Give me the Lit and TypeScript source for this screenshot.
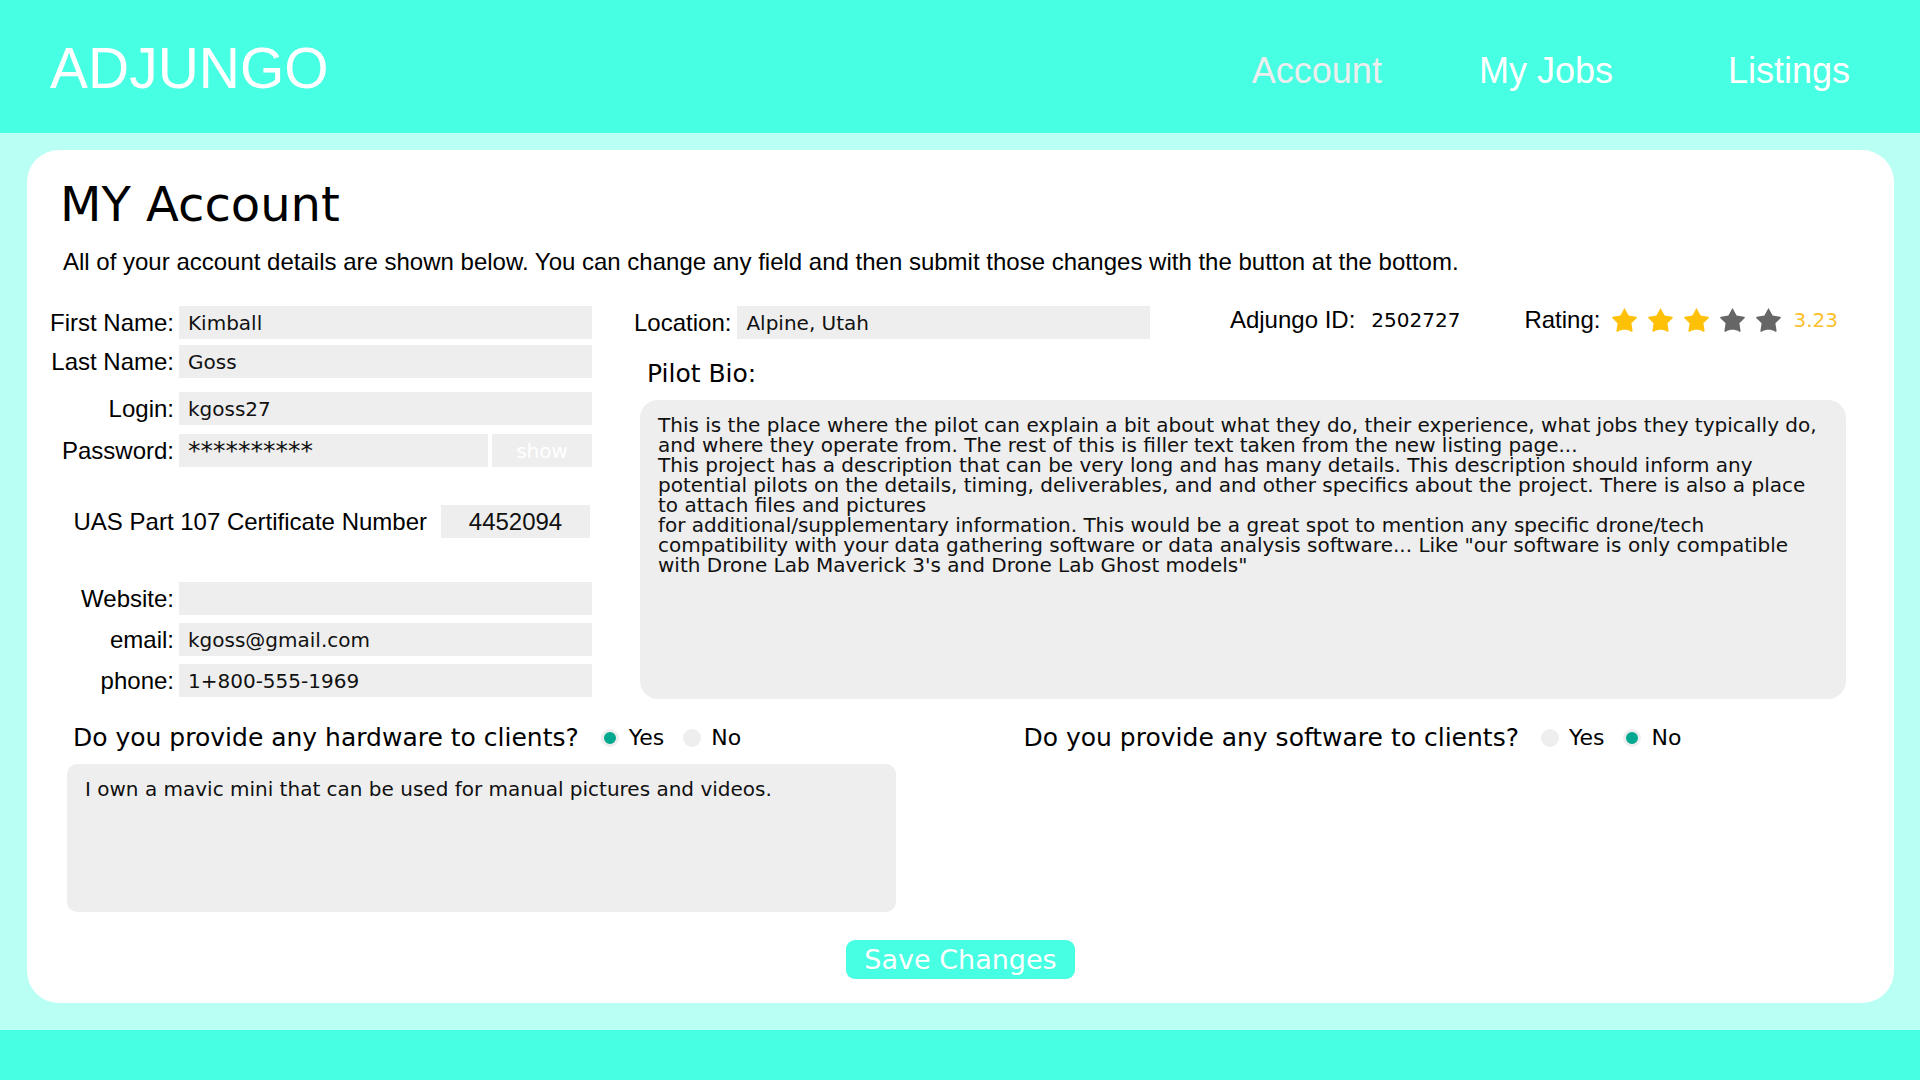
import { LitElement, html, css } from "lit";
import { customElement, property, state } from "lit/decorators.js";

const BIO = [
  "This is the place where the pilot can explain a bit about what they do, their experience, what jobs they typically do,",
  "and where they operate from. The rest of this is filler text taken from the new listing page...",
  "This project has a description that can be very long and has many details. This description should inform any",
  "potential pilots on the details, timing, deliverables, and and other specifics about the project. There is also a place",
  "to attach files and pictures",
  "for additional/supplementary information. This would be a great spot to mention any specific drone/tech",
  "compatibility with your data gathering software or data analysis software... Like \"our software is only compatible",
  "with Drone Lab Maverick 3's and Drone Lab Ghost models\"",
].join("\n");

@customElement("star-rating")
export class StarRating extends LitElement {
  @property({ type: Number }) value = 0;

  static styles = css`
    :host {
      display: flex;
      gap: 11px;
    }
    .star {
      display: block;
      width: 25px;
      height: 24px;
      fill: #666666;
    }
    .star.on {
      fill: #ffc107;
    }
  `;

  render() {
    return [1, 2, 3, 4, 5].map(
      (n) => html`
        <svg class="star ${n <= this.value ? "on" : ""}" viewBox="0 0 25 24" aria-hidden="true">
          <path
            d="M12.5 0.1 L16.6 7.6 L24 8.8 C25 9 25.1 9.7 24.5 10.3 L19.4 15.3 L20.6 22.9 C20.7 23.8 20.1 24.1 19.4 23.8 C15 21.2 10 21.2 5.6 23.8 C4.9 24.1 4.3 23.8 4.4 22.9 L5.6 15.3 L0.5 10.3 C-0.1 9.7 0 9 1 8.8 L8.4 7.6 Z"
          />
        </svg>
      `
    );
  }
}

@customElement("app-root")
export class AppRoot extends LitElement {
  @state() private hardware = "yes";
  @state() private software = "no";

  static styles = css`
    :host {
      display: flex;
      flex-direction: column;
      min-height: 100vh;
      background: #b9fff4;
      color: #000;
      font-family: "Liberation Sans", Arial, sans-serif;
      font-size: 24px;
      line-height: 28px;
    }
    * {
      box-sizing: border-box;
    }
    .top {
      display: flex;
      align-items: center;
      justify-content: space-between;
      padding: 35px 70px 32px 50px;
      background: #47ffe3;
    }
    .brand {
      color: #fff;
      font-size: 57px;
      line-height: 66px;
      text-decoration: none;
    }
    .nav {
      display: flex;
      gap: 97px;
      padding-top: 5px;
      font-size: 36px;
      line-height: 40px;
    }
    .nav a {
      color: #fff;
      text-decoration: none;
    }
    .nav a.current {
      color: #eeeeee;
    }
    .nav a:last-child {
      margin-left: 18px;
    }
    .main {
      flex: 1;
      padding: 17px 26px 27px 27px;
    }
    .card {
      padding: 26px 22px 24px;
      border-radius: 32px;
      background: #fff;
    }
    h1 {
      margin: 0 0 16px;
      padding-left: 11px;
      font-family: Verdana, "DejaVu Sans", sans-serif;
      font-size: 48px;
      font-weight: 400;
      line-height: 56px;
    }
    .intro {
      margin: 0 0 30px;
      padding-left: 14px;
    }
    .details {
      display: grid;
      grid-template-columns: 543px 1fr;
      column-gap: 42px;
      padding-right: 26px;
    }
    .group {
      display: grid;
      grid-template-columns: 125px 1fr;
      gap: 6px 5px;
      margin-bottom: 14px;
    }
    .group.spaced {
      row-gap: 9px;
      margin-bottom: 38px;
    }
    .group:last-child {
      row-gap: 8px;
      margin-bottom: 0;
    }
    .group label {
      text-align: right;
      white-space: nowrap;
      line-height: 33px;
    }
    input.text,
    textarea,
    .show {
      display: block;
      min-width: 0;
      margin: 0;
      border: 0;
      border-radius: 0;
      background: #eeeeee;
      color: #111;
      font-family: Verdana, "DejaVu Sans", sans-serif;
      font-size: 20px;
    }
    input.text {
      width: 100%;
      height: 33px;
      padding: 0 9px;
    }
    .secret {
      display: grid;
      grid-template-columns: 1fr 100px;
      gap: 4px;
    }
    .secret input.text {
      font-size: 25px;
    }
    .show {
      padding: 0;
      color: #fff;
    }
    .cert {
      display: flex;
      align-items: center;
      justify-content: flex-end;
      gap: 14px;
      margin-bottom: 44px;
      padding-right: 2px;
      line-height: 33px;
    }
    .cert input.text {
      width: 149px;
      padding: 0;
      font-family: inherit;
      font-size: 24px;
      text-align: center;
    }
    .summary {
      display: flex;
      align-items: flex-start;
      justify-content: space-between;
      margin-bottom: 20px;
      padding-right: 8px;
    }
    .place {
      display: flex;
      gap: 6px;
      line-height: 33px;
    }
    .place input.text {
      width: 413px;
    }
    .meta {
      display: flex;
      gap: 64px;
    }
    .pair {
      display: flex;
      align-items: center;
      gap: 12px;
    }
    .pair.id {
      gap: 16px;
    }
    .value {
      font-family: Verdana, "DejaVu Sans", sans-serif;
      font-size: 20px;
    }
    .value.score {
      color: #fcbf2c;
    }
    .question {
      font-family: Verdana, "DejaVu Sans", sans-serif;
      font-size: 25px;
      line-height: 30px;
    }
    .bio-label {
      display: block;
      margin-bottom: 11px;
      padding-left: 13px;
    }
    textarea {
      width: 100%;
      padding: 15px 18px;
      border-radius: 10px;
      line-height: 20px;
      resize: none;
    }
    .bio {
      padding-left: 6px;
    }
    .bio textarea {
      height: 299px;
      border-radius: 18px;
    }
    .offers {
      display: grid;
      grid-template-columns: 1fr 1fr;
      column-gap: 122px;
      margin-top: 24px;
      padding: 0 26px 0 18px;
    }
    fieldset {
      min-width: 0;
      margin: 0;
      padding: 0;
      border: 0;
    }
    .ask {
      display: flex;
      align-items: center;
      margin-bottom: 11px;
      padding-left: 6px;
    }
    .ask .question {
      margin-right: 22px;
    }
    .choice {
      display: flex;
      align-items: center;
      gap: 10px;
      margin-right: 19px;
      font-family: Verdana, "DejaVu Sans", sans-serif;
      font-size: 22px;
    }
    .choice input {
      appearance: none;
      width: 18px;
      height: 18px;
      margin: 0;
      border: 3px solid #eeeeee;
      border-radius: 50%;
      background: #eeeeee;
    }
    .choice input:checked {
      background: #00a88f;
    }
    .offers textarea {
      height: 148px;
    }
    .save {
      display: block;
      margin: 28px auto 0;
      padding: 0 18px;
      border: 0;
      border-radius: 9px;
      background: #47ffe3;
      color: #fff;
      font-family: Verdana, "DejaVu Sans", sans-serif;
      font-size: 27px;
      line-height: 39px;
    }
    .bottom {
      height: 50px;
      background: #47ffe3;
    }
  `;

  private field(id: string, label: string, value: string, type = "text") {
    return html`
      <label for=${id}>${label}</label>
      <input class="text" id=${id} type=${type} .value=${value} />
    `;
  }

  private choices(name: string, current: string, pick: (v: string) => void) {
    return [["yes", "Yes"], ["no", "No"]].map(
      ([value, text]) => html`
        <label class="choice">
          <input
            type="radio"
            name=${name}
            value=${value}
            .checked=${current === value}
            @change=${() => pick(value)}
          />
          ${text}
        </label>
      `
    );
  }

  render() {
    return html`
      <header class="top">
        <a class="brand" href="#">ADJUNGO</a>
        <nav class="nav">
          <a class="current" href="#account">Account</a>
          <a href="#jobs">My Jobs</a>
          <a href="#listings">Listings</a>
        </nav>
      </header>

      <main class="main">
        <form class="card" @submit=${(e: Event) => e.preventDefault()}>
          <h1>MY Account</h1>
          <p class="intro">
            All of your account details are shown below. You can change any field and then submit those changes with the button at the bottom.
          </p>

          <div class="details">
            <div>
              <div class="group">
                ${this.field("first", "First Name:", "Kimball")}
                ${this.field("last", "Last Name:", "Goss")}
              </div>
              <div class="group spaced">
                ${this.field("login", "Login:", "kgoss27")}
                <label for="password">Password:</label>
                <div class="secret">
                  <input class="text" id="password" type="text" .value=${"*".repeat(10)} />
                  <button class="show" type="button">show</button>
                </div>
              </div>
              <div class="cert">
                <label for="cert">UAS Part 107 Certificate Number</label>
                <input class="text" id="cert" type="text" .value=${"4452094"} />
              </div>
              <div class="group">
                ${this.field("website", "Website:", "", "url")}
                ${this.field("email", "email:", "kgoss@gmail.com", "email")}
                ${this.field("phone", "phone:", "1+800-555-1969", "tel")}
              </div>
            </div>

            <div>
              <div class="summary">
                <div class="place">${this.field("location", "Location:", "Alpine, Utah")}</div>
                <div class="meta">
                  <div class="pair id">
                    <span>Adjungo ID:</span>
                    <span class="value">2502727</span>
                  </div>
                  <div class="pair">
                    <span>Rating:</span>
                    <star-rating .value=${3}></star-rating>
                    <span class="value score">3.23</span>
                  </div>
                </div>
              </div>
              <label class="question bio-label" for="bio">Pilot Bio:</label>
              <div class="bio">
                <textarea id="bio" .value=${BIO}></textarea>
              </div>
            </div>
          </div>

          <div class="offers">
            <fieldset aria-labelledby="hw">
              <div class="ask">
                <span class="question" id="hw">Do you provide any hardware to clients?</span>
                ${this.choices("hardware", this.hardware, (v) => (this.hardware = v))}
              </div>
              <textarea
                aria-labelledby="hw"
                .value=${"I own a mavic mini that can be used for manual pictures and videos."}
              ></textarea>
            </fieldset>
            <fieldset aria-labelledby="sw">
              <div class="ask">
                <span class="question" id="sw">Do you provide any software to clients?</span>
                ${this.choices("software", this.software, (v) => (this.software = v))}
              </div>
            </fieldset>
          </div>

          <button class="save" type="submit">Save Changes</button>
        </form>
      </main>

      <footer class="bottom"></footer>
    `;
  }
}
